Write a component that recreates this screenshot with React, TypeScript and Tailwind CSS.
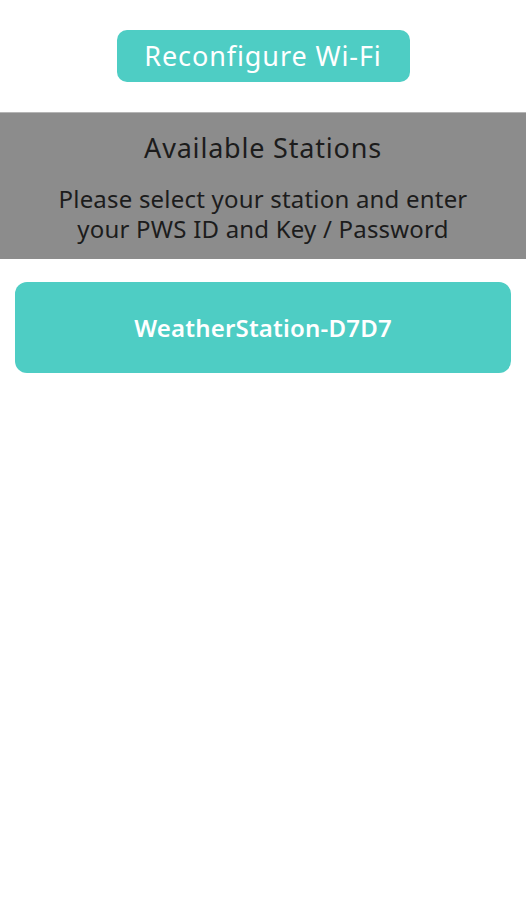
const font = { fontFamily: '"Noto Sans", "Open Sans", sans-serif' }

export default function App() {
  return (
    <div className="min-h-[900px] bg-white" style={font}>
      <div className="flex justify-center pt-[30px]">
        <button className="h-[52px] w-[293px] rounded-[10px] bg-[#4ecdc4] text-[27px] tracking-[0.9px] text-white">
          Reconfigure Wi-Fi
        </button>
      </div>
      <section className="mt-[30px] flex h-[147px] flex-col items-center border-t border-[#b5b5b5] bg-[#8c8c8c] pt-[16px] text-center text-[#1c1c1c]">
        <h2 className="text-[27px] leading-[38px] tracking-[0.8px]">Available Stations</h2>
        <p className="mt-[17px] text-[24px] leading-[30px] tracking-[0.2px]">
          Please select your station and enter
          <br />
          your PWS ID and Key / Password
        </p>
      </section>
      <div className="px-[15px] pt-[23px]">
        <button className="h-[91px] w-full rounded-[12px] bg-[#4ecdc4] text-[24px] font-semibold tracking-[0.2px] text-white">
          WeatherStation-D7D7
        </button>
      </div>
    </div>
  )
}
